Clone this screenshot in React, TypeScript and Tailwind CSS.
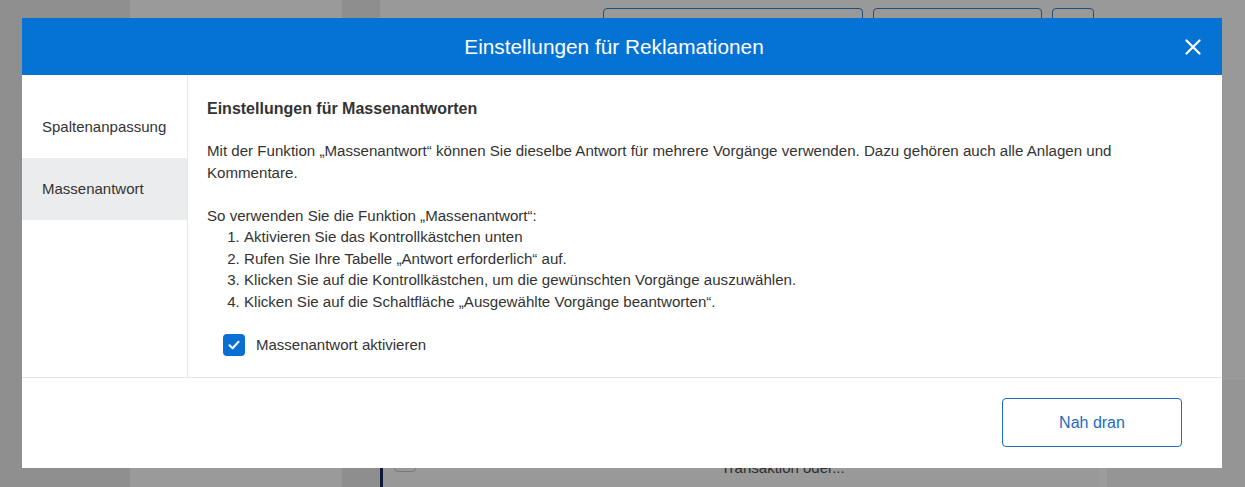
import React from "react";

function CloseIcon() {
  return (
    <svg width="16" height="16" viewBox="0 0 16 16" fill="none">
      <path d="M1.5 1.5 L14.5 14.5 M14.5 1.5 L1.5 14.5" stroke="white" strokeWidth="2.2" strokeLinecap="round" />
    </svg>
  );
}

function Check() {
  return (
    <svg width="14" height="14" viewBox="0 0 14 14" fill="none">
      <path d="M2.5 7.2 L5.6 10.2 L11.5 3.8" stroke="white" strokeWidth="2" strokeLinecap="round" strokeLinejoin="round" />
    </svg>
  );
}

export default function App() {
  return (
    <div
      className="relative w-[1245px] h-[487px] overflow-hidden bg-[#999999]"
      style={{ fontFamily: '"Liberation Sans", Arial, sans-serif' }}
    >
      {/* dimmed background page */}
      <div className="flex h-full">
        <div className="w-[130px] bg-[#8f8f8f]" />
        <div className="w-[212px] bg-[#9a9a9a]" />
        <div className="w-[38px] bg-[#8e8e8e]" />
        <div className="relative flex-1 bg-[#999999]">
          <div className="flex pl-[223px] pt-[8px]">
            <div className="w-[260px] h-[20px] rounded-[4px] border border-[#1f4f7d]" />
            <div className="ml-[10px] w-[169px] h-[20px] rounded-[4px] border border-[#1f4f7d]" />
            <div className="ml-[10px] w-[42px] h-[20px] rounded-[4px] border border-[#1f4f7d]" />
          </div>
          <div className="absolute left-0 top-[440px] bottom-0 w-[3px] bg-[#0d1a3d]" />
          <div className="absolute left-[14px] top-[458px] w-[22px] h-[14px] rounded-[4px] border border-[#7a7a7a]" />
          <div className="absolute left-[341px] top-[458px] text-[15px] text-[#2e2e2e] leading-[20px]">
            Transaktion oder...
          </div>
          <div className="absolute left-[719px] top-[380px] bottom-0 w-[8px] bg-[#9d9d9d]" />
          <div className="absolute left-[727px] top-[380px] bottom-0 right-0 bg-[#959595]" />
        </div>
      </div>

      {/* modal */}
      <div className="absolute left-[22px] top-[18px] w-[1200px] h-[450px] bg-white flex flex-col">
        <div className="relative h-[57px] shrink-0 bg-[#0573d4] flex items-center justify-center pr-[16px]">
          <span className="text-white text-[20.8px] leading-[24px] pt-[1px]">Einstellungen für Reklamationen</span>
          <button className="absolute right-[21px] top-[21px]">
            <CloseIcon />
          </button>
        </div>
        <div className="flex h-[303px] border-b border-[#e6e6e6]">
          <div className="w-[166px] shrink-0 border-r border-[#e6e6e6] pt-[21px] text-[15px] text-[#333333]">
            <div className="h-[62px] flex items-center px-5">Spaltenanpassung</div>
            <div className="h-[62px] flex items-center px-5 bg-[#ebecee]">Massenantwort</div>
          </div>
          <div className="flex-1 pl-[19px] pr-5 pt-[24px] text-[15.1px] text-[#333333]">
            <h2 className="font-bold text-[16px] leading-[20px]">Einstellungen für Massenantworten</h2>
            <p className="mt-[21px] leading-[22px]">
              Mit der Funktion „Massenantwort“ können Sie dieselbe Antwort für mehrere Vorgänge verwenden. Dazu gehören auch alle Anlagen und
              <br />
              Kommentare.
            </p>
            <p className="mt-[21px] leading-[21px]">So verwenden Sie die Funktion „Massenantwort“:</p>
            <ol className="list-decimal pl-[37px] leading-[21.5px]">
              <li>Aktivieren Sie das Kontrollkästchen unten</li>
              <li>Rufen Sie Ihre Tabelle „Antwort erforderlich“ auf.</li>
              <li>Klicken Sie auf die Kontrollkästchen, um die gewünschten Vorgänge auszuwählen.</li>
              <li>Klicken Sie auf die Schaltfläche „Ausgewählte Vorgänge beantworten“.</li>
            </ol>
            <label className="mt-[22px] ml-4 flex items-center gap-[11px]">
              <span className="w-[22px] h-[22px] rounded-[4px] bg-[#0a6fd3] flex items-center justify-center">
                <Check />
              </span>
              <span className="text-[15px]">Massenantwort aktivieren</span>
            </label>
          </div>
        </div>
        <div className="flex-1 flex items-start justify-end pt-[20px] pr-[40px]">
          <button className="w-[180px] h-[49px] rounded-[4px] border border-[#1c6cc2] text-[#1c6cc2] text-[16px]">
            Nah dran
          </button>
        </div>
      </div>
    </div>
  );
}
